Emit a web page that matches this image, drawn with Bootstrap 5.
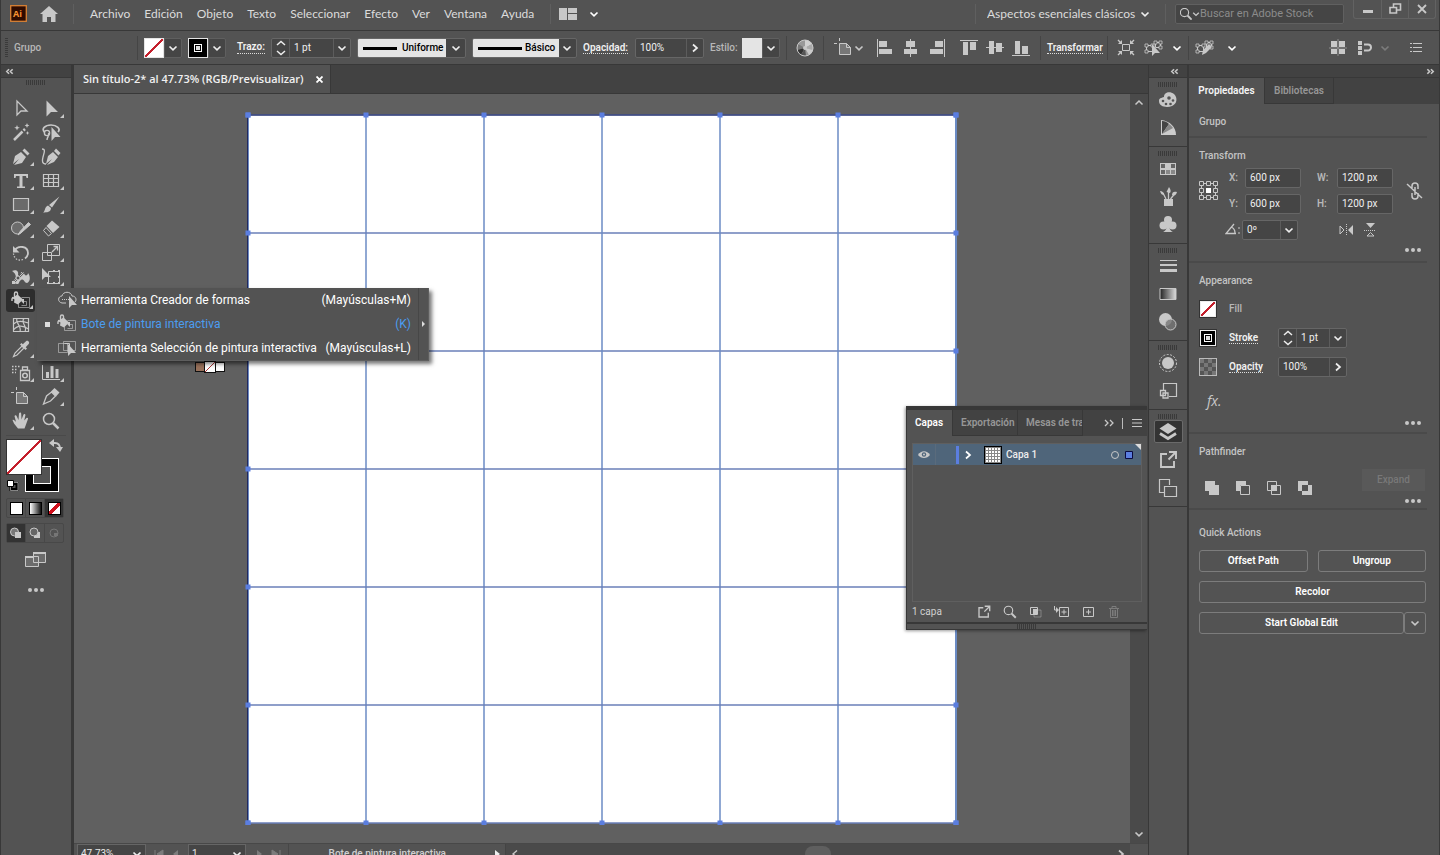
<!DOCTYPE html>
<html lang="es">
<head>
<meta charset="utf-8">
<meta name="viewport" content="width=device-width, initial-scale=1">
<title>Sin título-2* al 47.73% (RGB/Previsualizar)</title>
<link href="https://cdn.jsdelivr.net/npm/bootstrap@5.3.0/dist/css/bootstrap.min.css" rel="stylesheet">
<style>
:root{--panel:#535353;--dark:#424242;--edge:#383838;--field:#454545;--line:#666;--ink:#c8c8c8;--soft:#b8b8b8;
--chev:url("data:image/svg+xml,%3Csvg xmlns='http://www.w3.org/2000/svg' viewBox='0 0 10 10'%3E%3Cpath d='M1.5 3.5 5 6.8 8.5 3.5' fill='none' stroke='%23eee' stroke-width='1.7'/%3E%3C/svg%3E")}
html,body{height:100%}
body{background:var(--panel);color:var(--soft);font:10px/14px Roboto,"Liberation Sans",sans-serif;overflow:hidden}
button,input,select{font:inherit;color:inherit;background:none;border:0;padding:0;margin:0;min-width:0;border-radius:0}
svg{display:block;flex:none;fill:none;stroke:none;color:var(--ink)}
a{color:inherit;text-decoration:none}
.shell{height:calc(100% + 8px);border:solid var(--edge);border-width:0 1px}
.i20{width:20px;height:20px}.i10{width:10px;height:10px}
.center{display:flex;align-items:center;justify-content:center}
.title{font-weight:500}.strong{font-weight:600;color:#f0f0f0}
.dotted{border-bottom:1px dotted #ddd;line-height:12px}
.grip{width:20px;height:5px;background:repeating-linear-gradient(90deg,#3a3a3a 0 1px,transparent 1px 2px)}
.vgrip{width:3px;height:20px;background:repeating-linear-gradient(#3a3a3a 0 1px,transparent 1px 2px)}
.vrule{width:1px;height:24px;background:#454545}
.topbar{height:31px;border-bottom:1px solid var(--edge);padding:0 3px 3px 9px;font:12px/16px Lato,"Open Sans",sans-serif;color:#dcdcdc}
.topbar .vrule{height:20px;background:#5f5f5f}
.home-link{margin:0 15px 0 13px}
.menu-gap{gap:14px}
.select-arrow{appearance:none;background:var(--chev) right 3px center/10px no-repeat}
.workspace-select{width:170px;margin-left:11px;background-position:right 7px center}
.search{width:169px;height:20px;background:var(--field);border:1px solid #606060;border-radius:2px;margin:0 9px;font:11px/16px Roboto,sans-serif}
.search input::placeholder{color:#8b8b8b;opacity:1}
.winbtns{height:19px;border:1px solid #626262;border-top:0;border-radius:0 0 3px 3px;align-self:flex-start}
.winbtns button{width:27px}.winbtns button+button{border-left:1px solid #626262}
.control-bar{height:34px;padding:0 13px 0 4px;gap:6px;border-bottom:1px solid var(--edge)}
.context{width:117px}
.box{display:flex;height:20px;border:1px solid var(--line);border-radius:2px;background:var(--field);color:#f0f0f0;flex:none}
.box>*+*{border-left:1px solid #5c5c5c}
.box input{flex:1;width:10px;padding-left:4px}
.box button{width:17px;display:flex;align-items:center;justify-content:center}
.box svg,.text-white{color:#eee}
.pick{width:38px;border-color:#5f5f5f}
.pick .chip{width:20px;margin:-1px 0 -1px -1px;flex:none;border:1px solid #e4e4e4}
.plain-chip{background:#e4e4e4}
.none{background:linear-gradient(135deg,#fff calc(50% - 1px),#c4202c calc(50% - 1px) calc(50% + 1px),#fff calc(50% + 1px))}
.strokechip{background:#000;display:flex;align-items:center;justify-content:center}
.strokechip::after{content:"";width:8px;height:8px;border:1px solid #fff;background:#000;box-shadow:inset 0 0 0 1px #000,inset 0 0 0 4px #ddd}
.w80{width:80px}.w46{width:46px}.w26{width:26px}.w33{width:33px}.w36{width:36px}.w38{width:38px}.w42{width:42px}.w54{width:54px}.w56{width:56px}.w69{width:69px}
.brush{appearance:none;height:20px;border:1px solid var(--line);border-radius:2px;color:#000;font-weight:500;flex:none}
.brush-a{width:109px;padding-left:44px;background:var(--chev) right 4px center/10px no-repeat,linear-gradient(#000,#000) 5px 8px/34px 3px no-repeat,linear-gradient(#e4e4e4,#e4e4e4) 0/88px 100% no-repeat,var(--field)}
.brush-b{width:105px;padding-left:52px;background:var(--chev) right 4px center/10px no-repeat,linear-gradient(#000,#000) 5px 8px/44px 3px no-repeat,linear-gradient(#e4e4e4,#e4e4e4) 0/86px 100% no-repeat,var(--field)}
.alignset{display:flex}.alignset button{width:26px}
.lead24{width:24px}
.toolbox{width:72px;border-right:2px solid var(--edge);flex:none}
.collapse-strip{height:13px;background:var(--dark);border-bottom:1px solid var(--edge)}
.collapse-strip svg{width:9px;height:9px;stroke-width:2}
.tools{display:grid;grid-template-columns:30px 30px;grid-auto-rows:24px;margin:11px 5px 0;position:relative;padding-bottom:2px;border-bottom:1px solid #4a4a4a}
.tools>button{position:relative;width:30px}
.tools>button.more::after{content:"";position:absolute;right:2px;bottom:3px;border:2px solid var(--ink);border-left-color:transparent;border-top-color:transparent}
.tools .active-tool{background:#2d2d2d;border-radius:3px;width:29px;height:23px}
.flyout{position:absolute;left:31px;top:191px;width:392px;background:#535353;border:1px solid #5e5e5e;border-width:0 1px 1px 0;box-shadow:3px 3px 4px #0008;z-index:5;font-size:12px;color:#fff;display:flex}
.flyout .fly-item{height:24px;display:flex;width:100%;align-items:center;text-align:left;white-space:nowrap}
.flyout .fly-mark{width:20px;display:flex;justify-content:center}
.fly-mark i{width:5px;height:5px;background:#ddd}
.flyout .fly-item.chosen{color:#4b9df0}
.flyout .fly-key{margin-left:auto;padding-right:7px}
.flyout .tear{width:10px;flex:none;border-left:1px solid #474747}
.swatches{height:55px;margin:3px 5px 0;position:relative}
.sw-stroke{position:absolute;left:19px;top:19px;width:34px;height:34px;background:#000;border:1px solid #fff;padding:7px}
.sw-stroke i{display:block;height:100%;border:1px solid #fff;background:#535353}
.sw-fill{position:absolute;left:0;top:0;width:36px;height:36px;border:1px solid #333}
.sw-swap{position:absolute;right:3px;top:0}.sw-reset{position:absolute;left:0;top:40px}
.seg{display:flex;height:20px;border:1px solid #484848;border-radius:2px;margin:0 7px 5px 5px}
.seg button{flex:1;display:flex;align-items:center;justify-content:center}.seg button+button{border-left:1px solid #484848}.seg .on{background:#333}
.seg i{width:13px;height:13px;border:1px solid #000}
.white{background:#fff}.fade-chip{background:linear-gradient(90deg,#fff,#111)}
.thick{background:linear-gradient(135deg,#fff calc(50% - 2px),#d0101c calc(50% - 2px) calc(50% + 2px),#fff calc(50% + 2px))}
.doc{position:relative;border-left:1px solid var(--edge);background:var(--dark)}
.doctabs{height:29px;border-bottom:1px solid var(--edge)}
.doctab{width:257px;padding:0 7px 0 9px;background:var(--panel);border-right:1px solid var(--edge);font:600 11px/16px "Open Sans",sans-serif;color:#f0f0f0}
.canvas{background:#606060;position:relative;overflow:hidden}
.artboard{width:714px;height:713px}
.cursor-chips{position:absolute;left:121px;top:267px;display:flex}
.cursor-chips i{width:10px;height:10px;border:1px solid #111;margin-top:1px}
.cursor-chips .mid{width:12px;height:12px;margin:0 -1px}
.cursor-chips .none{background:linear-gradient(135deg,#fff 47%,#a33 47% 53%,#fff 53%)}
.brown{background:#97705a}
.vscroll{width:18px;background:#4a4a4a;padding:4px 0 4px}
.statusbar{height:20px;background:var(--panel);border-top:1px solid #484848;color:#e8e8e8}
.statusbar select{height:20px;border:1px solid var(--line);background-color:var(--field);padding-left:3px}
.statusbar .zoom{width:69px;margin-left:3px}.statusbar .page{width:58px}
.navbtns{width:42px}.navbtns button{width:17px}
.statustext{width:207px;border-left:1px solid #474747;padding-right:49px;color:#cfcfcf}
.hscroll{background:#4a4a4a;border-left:1px solid #444}
.corner{width:18px}
.thumb{width:26px;height:16px;border-radius:8px;background:#5f5f5f}
.dockcol{width:41px;border-right:2px solid var(--edge);border-left:1px solid var(--edge);flex:none}
.dockgroup{padding:4px 0 2px;border-bottom:1px solid var(--edge);display:flex;flex-direction:column;align-items:center}
.dockgroup .grip{margin-bottom:1px}
.dockgroup button{width:29px;height:23px;margin:0 0 5px;border:1px solid transparent;border-radius:2px}
.dockgroup .on{background:#333;border-color:#6a6a6a}
.props{width:250px;flex:none}
.ptabs{background:var(--dark);height:26px}
.ptabs button{border-right:1px solid var(--edge);border-bottom:1px solid var(--edge);font-weight:600;color:#969696;width:69px}
.ptabs .on{width:76px;background:var(--panel);color:#f5f5f5;border-bottom:0}
.sect{margin-right:12px;padding:9px 2px 0 10px;border-bottom:2px solid #4a4a4a}
.sect h2,.quick h2{font-size:10px;line-height:18px;font-weight:500;margin:0;color:#c4c4c4}
.sect-head{height:34px}.sect-transform{height:125px}.sect-look{height:171px}.sect-path{height:76px}
.tgrid{display:grid;grid-template-columns:30px 16px 56px 16px 20px 56px 1fr;grid-auto-rows:20px;gap:6px 0;margin-top:3px;align-items:center}
.tgrid label{font-weight:600}
.refpoint{grid-row:span 2;justify-self:start}.unlink{grid-row:span 2;justify-self:end;margin-right:1px}
.angle{grid-column:1/4;padding-left:26px}.flips{grid-column:5/7;padding-left:22px;gap:11px}
.dots{display:flex;gap:2px;justify-content:flex-end;padding-right:4px}
.dots i{width:4px;height:4px;border-radius:50%;background:var(--ink)}
.look{display:flex;align-items:center;height:29px}
.look .name{width:61px;padding-left:12px}
.chip18{width:18px;height:18px;border:1px solid #333;box-shadow:inset 0 0 0 1px #eee;flex:none}
.checker{border-color:#bbb;box-shadow:none;background:repeating-conic-gradient(#777 0 25%,#555 0 50%) 0/8px 8px}
.fxbtn{font:italic 14px/24px "Open Sans",sans-serif;color:var(--ink)}
.pathrow{gap:17px;padding:0 0 0 6px}
.quick{margin-right:13px;padding:14px 0 0 10px}
.qgrid{display:grid;grid-template-columns:1fr 1fr;gap:9px 10px;margin-top:8px}
.qwide{grid-column:1/3}
.qbtn{height:22px;border:1px solid #7c7c7c;border-radius:3px;color:#fff;font-weight:600}
.qmore{width:22px}
.expand-btn{width:63px;height:22px;background:#595959;color:#787878;font-weight:500}
.layers{position:absolute;right:1px;top:341px;width:241px;background:var(--panel);border-top:4px solid var(--edge);border-left:1px solid var(--edge);box-shadow:-1px 1px 3px #0006;z-index:3}
.ltabs{height:26px;background:var(--dark)}
.ltabs button{white-space:nowrap;overflow:hidden;font-weight:600;color:#979797;text-align:left;border-right:1px solid var(--edge);border-bottom:1px solid var(--edge);padding-left:8px;width:65px}
.ltabs .on{background:var(--panel);color:#fff;border-bottom:0;width:46px}
.bar11{width:1px;height:11px;background:#bbb}
.llist{margin:7px 5px 0;border:1px solid #5f5f5f;height:159px}
.lrow{height:21px;background:#4f657a;color:#eee;position:relative;font-weight:500}
.lrow .fold{position:absolute;right:0;top:0;border:3px solid #ddd;border-left-color:transparent;border-bottom-color:transparent}
.lrow .eye{width:22px}.lrow .lock{width:21px;height:21px;border-left:1px solid #5a6b7c}.lrow .tint{width:3px;height:18px;background:#5b7ee0}
.lrow .expander{margin:0 11px 0 4px}
.lthumb{width:18px;height:18px;border:1px solid #000;background:repeating-linear-gradient(90deg,#888 0 1px,transparent 1px 3px),repeating-linear-gradient(#888 0 1px,#fff 1px 3px)}
.lfoot{height:20px;padding:0 5px;color:#d0d0d0}
.lfoot .btnrow{margin:0 18px 0 auto;gap:6px}
.lgrip{height:8px;border-top:2px solid var(--edge);border-bottom:1px solid var(--edge)}
.shrinkable{min-height:0;min-width:0}
</style>
</head>
<body>
<svg width="0" height="0" class="position-absolute" aria-hidden="true"><defs>
<linearGradient id="gr"><stop stop-color="#222"/><stop offset="1" stop-color="#ddd"/></linearGradient>
<symbol id="chev" viewBox="0 0 10 10"><path d="M1.5 3.5 5 6.8 8.5 3.5" stroke="currentColor" stroke-width="1.7"/></symbol>
<symbol id="chevup" viewBox="0 0 10 10"><path d="M1.5 6.5 5 3 8.5 6.5" stroke="currentColor" stroke-width="1.5"/></symbol>
<symbol id="chevr" viewBox="0 0 10 10"><path d="M3 1.5 7 5 3 8.5" stroke="currentColor" stroke-width="1.7"/></symbol>
<symbol id="chevl" viewBox="0 0 10 10"><path d="M7 1.5 3 5 7 8.5" stroke="currentColor" stroke-width="1.4"/></symbol>
<symbol id="dbll" viewBox="0 0 10 10"><path d="M4.500 2.500 2 5 4.500 7.500M8.500 2.500 6 5 8.500 7.500" stroke="currentColor" stroke-width="1.800"/></symbol>
<symbol id="dblrs" viewBox="0 0 10 10"><path d="M1.500 2.500 4 5 1.500 7.500M5.500 2.500 8 5 5.500 7.500" stroke="currentColor" stroke-width="1.800"/></symbol>
<symbol id="dblr" viewBox="0 0 10 10"><path d="M1 2 4 5 1 8M6 2 9 5 6 8" stroke="currentColor" stroke-width="1.3"/></symbol>
<symbol id="updown" viewBox="0 0 12 18"><path d="M2 6 6 2.5 10 6M2 12 6 15.5 10 12" stroke="#eee" stroke-width="1.5"/></symbol>
<symbol id="paint" viewBox="0 0 20 20"><path d="M10.500 6.500h8v10h-11v-4M10.500 10.500h5v4h-5" stroke="currentColor" stroke-opacity=".6"/><path d="M1 7 6.500 3.500 12 8.500 7 13.500 3 11.500 3.500 8.500Z" fill="currentColor"/><path d="M3.500 6V2.500a1.500 1.500 0 0 1 3 0V5M2 6 1 8v2" stroke="currentColor" stroke-width="1.400"/><path d="M10 8h3v5l-2-2Z" fill="currentColor"/></symbol>
<symbol id="sel" viewBox="0 0 20 20"><path d="M6 2v14l4-4h6Z" stroke="currentColor" stroke-width="1.3"/></symbol>
<symbol id="dir" viewBox="0 0 20 20"><path d="M5.500 1.500v16L10 13h7Z" fill="currentColor"/></symbol>
<symbol id="hand" viewBox="0 0 20 20"><path d="M7 17.500 3 12.500 1.500 9c1-.8 2 .2 3.500 2L3.500 5c.6-1.400 2-.8 2.200.3L7.500 9 8 2.500c.6-1.400 2.200-1 2.200.3l.3 5.700 2-5c.8-1.200 2.200-.5 1.900.8L13.200 9.500l2.300-2.500c1-.7 2 .2 1.400 1.300L15 13.500l-1.500 4Z" fill="currentColor"/></symbol>
<symbol id="lens" viewBox="0 0 20 20"><circle cx="8" cy="8" r="5.500" stroke="currentColor" stroke-width="1.500"/><path d="m12 12 5.500 5.500" stroke="currentColor" stroke-width="2.500"/></symbol>
<symbol id="export" viewBox="0 0 20 20"><path d="M9 4H3v13h13v-6M11 2h7v7M17 3l-6.500 6.500" stroke="currentColor" stroke-width="1.900"/></symbol>
<symbol id="artb" viewBox="0 0 20 20"><path d="M5.500 5.500h7l4 4v7h-11Z" fill="#777" stroke="currentColor"/><path d="M5.500 0v3M0 5.500h3M12.500 5.500v4h4" stroke="currentColor"/></symbol>
<symbol id="ptsel" viewBox="0 0 20 20"><path d="M2.500 7.500h6v6h-6zM11.500 4.500h5v5h-5z" stroke="currentColor"/><path d="M1 6h3v3H1zM1 12h3v3H1zM7 6h3v3H7zM10 3h3v3h-3zM15 3h3v3h-3zM15 8h3v3h-3z" fill="#535353" stroke="currentColor" stroke-width=".8"/></symbol>
</defs></svg>

<div class="shell d-flex flex-column">
<header class="topbar d-flex align-items-center">
 <svg width="17" height="17" viewBox="0 0 17 17"><rect x=".7" y=".7" width="15.600" height="15.600" fill="#2f0b00" stroke="#d98236" stroke-width="1.300"/><text x="3" y="12" font-family="Open Sans" font-size="9" font-weight="700" fill="#f79332">Ai</text></svg>
 <a href="#" aria-label="Inicio" class="home-link"><svg width="18" height="16" viewBox="0 0 18 16"><path d="M9 0 0 8h2.500v8H7v-5h4v5h4.500V8H18Z" fill="currentColor"/></svg></a>
 <span class="vrule"></span>
 <nav class="d-flex menu-gap px-3" aria-label="Menú principal"><a href="#">Archivo</a><a href="#">Edición</a><a href="#">Objeto</a><a href="#">Texto</a><a href="#">Seleccionar</a><a href="#">Efecto</a><a href="#">Ver</a><a href="#">Ventana</a><a href="#">Ayuda</a></nav>
 <span class="vrule"></span>
 <button class="d-flex align-items-center gap-2 ms-2" aria-label="Organizar documentos"><svg width="18" height="12" viewBox="0 0 18 12"><path d="M0 0h8v12H0zM9 0h9v5H9zM9 6h9v6H9z" fill="currentColor"/></svg><svg class="i10 text-white ms-1"><use href="#chev"/></svg></button>
 <span class="vrule ms-auto"></span>
 <select class="select-arrow workspace-select" aria-label="Espacio de trabajo"><option>Aspectos esenciales clásicos</option></select>
 <span class="vrule ms-2"></span>
 <label class="search d-flex align-items-center"><svg class="ms-1" width="12" height="12" viewBox="2 2 16 16"><use href="#lens" width="20" height="20"/></svg><svg width="8" height="8"><use href="#chev"/></svg><input class="flex-fill" type="search" placeholder="Buscar en Adobe Stock" aria-label="Buscar en Adobe Stock"></label>
 <div class="winbtns d-flex"><button class="center" aria-label="Minimizar"><svg width="10" height="10"><path d="M0 6h10v3H0z" fill="currentColor"/></svg></button><button class="center" aria-label="Restaurar"><svg width="13" height="12"><path d="M4.500 4V1h7v6H8M1 4.500h6.500V10H1Z" stroke="currentColor" stroke-width="1.600"/></svg></button><button class="center" aria-label="Cerrar"><svg width="10" height="10"><path d="m1 1 8 8M9 1 1 9" stroke="currentColor" stroke-width="1.800"/></svg></button></div>
</header>

<div class="control-bar d-flex align-items-center" role="toolbar" aria-label="Control">
 <span class="vgrip"></span><span class="context title">Grupo</span><span class="vrule"></span>
 <div class="box pick"><span class="chip none"></span><button aria-label="Relleno"><svg class="i10"><use href="#chev"/></svg></button></div>
 <div class="box pick"><span class="chip strokechip"></span><button aria-label="Color de trazo"><svg class="i10"><use href="#chev"/></svg></button></div>
 <label for="trazo" class="w33 ps-2 flex-shrink-0 text-nowrap d-flex justify-content-end"><span class="dotted strong">Trazo:</span></label>
 <div class="box w80"><button aria-label="Ajustar trazo"><svg width="12" height="18"><use href="#updown"/></svg></button><input id="trazo" value="1 pt"><button aria-label="Grosores"><svg class="i10"><use href="#chev"/></svg></button></div>
 <select class="brush brush-a" aria-label="Perfil de anchura"><option>Uniforme</option></select>
 <select class="brush brush-b" aria-label="Pincel"><option>Básico</option></select>
 <label for="opac" class="w46"><span class="dotted strong">Opacidad:</span></label>
 <div class="box w69"><input id="opac" value="100%"><button aria-label="Opacidad"><svg class="i10"><use href="#chevr"/></svg></button></div>
 <span class="w26 title">Estilo:</span>
 <div class="box pick"><span class="chip plain-chip"></span><button aria-label="Estilo"><svg class="i10"><use href="#chev"/></svg></button></div>
 <span class="vrule"></span>
 <button class="lead24 center" aria-label="Volver a colorear"><svg width="18" height="18" viewBox="0 0 18 18"><circle cx="9" cy="9" r="8" fill="#999"/><path d="M9 9V1A8 8 0 0 1 16 5Z" fill="#d0d0d0"/><path d="M9 9 2 5A8 8 0 0 0 1 11Z" fill="#777"/><path d="M9 9 1 11a8 8 0 0 0 4 5Z" fill="#333"/><path d="m9 9-4 7a8 8 0 0 0 5 1Z" fill="#555"/><path d="m9 9 7-4a8 8 0 0 1 1 6Z" fill="#aaa"/><path d="m9 9 8 2a8 8 0 0 1-4 5Z" fill="#ccc"/><circle cx="9" cy="9" r="8" stroke="#c8c8c8"/><circle cx="9" cy="9" r="2" fill="#c8c8c8"/></svg></button>
 <span class="vrule"></span>
 <button class="d-flex align-items-center w36" aria-label="Mesa de trabajo"><svg class="i20 ms-1"><use href="#artb"/></svg><svg class="i10"><use href="#chev"/></svg></button>
 <div class="alignset"><button class="center" aria-label="Alinear a la izquierda"><svg class="i20"><path d="M2.500 1v18" stroke="currentColor"/><path d="M4 3h8v6H4zM4 11h13v5H4z" fill="currentColor"/></svg></button><button class="center" aria-label="Centrar horizontalmente"><svg class="i20"><path d="M9.500 1v18" stroke="currentColor"/><path d="M5 3h9v6H5zM3 11h13v5H3z" fill="currentColor"/></svg></button><button class="center" aria-label="Alinear a la derecha"><svg class="i20"><path d="M17.500 1v18" stroke="currentColor"/><path d="M8 3h8v6H8zM3 11h13v5H3z" fill="currentColor"/></svg></button></div>
 <div class="alignset"><button class="center" aria-label="Alinear arriba"><svg class="i20"><path d="M1 2.500h18" stroke="currentColor"/><path d="M4 4h5v13H4zM11 4h6v8h-6z" fill="currentColor"/></svg></button><button class="center" aria-label="Centrar verticalmente"><svg class="i20"><path d="M1 9.500h18" stroke="currentColor"/><path d="M4 3h5v13H4zM11 5h6v9h-6z" fill="currentColor"/></svg></button><button class="center" aria-label="Alinear abajo"><svg class="i20"><path d="M1 17.500h18" stroke="currentColor"/><path d="M4 3h5v13H4zM11 8h6v8h-6z" fill="currentColor"/></svg></button></div>
 <span class="vrule"></span>
 <button class="w54 strong"><span class="dotted">Transformar</span></button>
 <span class="vrule"></span>
 <button class="lead24 center" aria-label="Aislar"><svg class="i20"><path d="M6.500 6.500h7v6h-7z" stroke="currentColor"/><path d="M2 2l3 3M18 2l-3 3M2 17l3-3M18 17l-3-3" stroke="currentColor" stroke-width="1.400"/><path d="M6 2v4H2ZM14 2v4h4ZM6 17v-4H2ZM14 17v-4h4Z" fill="currentColor"/></svg></button>
 <button class="d-flex align-items-center w38" aria-label="Seleccionar similares"><svg class="i20"><use href="#ptsel"/><path d="M8 6v12l3-3h5Z" fill="currentColor"/></svg><svg class="i10 ms-2 text-white"><use href="#chev"/></svg></button>
 <span class="vrule"></span>
 <button class="d-flex align-items-center justify-content-between w42" aria-label="Editar similares"><svg class="i20"><use href="#ptsel"/><path d="M7 17l1-5 6-6 3 3-6 6Z" fill="currentColor"/></svg><svg class="i10 text-white"><use href="#chev"/></svg></button>
 <div class="d-flex align-items-center ms-auto">
 <button class="me-2" aria-label="Ajustar a píxel"><svg class="i20"><path d="M3 3h6v6H3zM11 3h6v6h-6zM3 11h6v5H3zM11 11h6v5h-6z" fill="currentColor"/><path d="M10 1v17M1 10h18" stroke="currentColor" stroke-opacity=".5"/></svg></button>
 <button aria-label="Ajustar a forma"><svg class="i20"><path d="M2 3h4v4H2zM2 8h4v4H2zM2 13h4v4H2z" fill="currentColor"/><path d="M8 6.500h4a3 3 0 0 1 0 6H8" stroke="currentColor" stroke-width="2"/></svg></button>
 <svg class="i10 ms-1 me-3" opacity=".35"><use href="#chev"/></svg>
 <button aria-label="Menú de panel"><svg class="i20"><path d="M4 5.500h2M4 9.500h2M4 13.500h2M7 5.500h9M7 9.500h9M7 13.500h9" stroke="currentColor"/></svg></button></div>
</div>

<div class="d-flex flex-fill shrinkable">
<aside class="toolbox" aria-label="Herramientas">
 <div class="collapse-strip d-flex align-items-center ps-1"><svg class="i10"><use href="#dbll"/></svg></div>
 <div class="center" style="height:8px"><span class="grip"></span></div>
 <div class="tools">
 <button class="center" aria-label="Selección"><svg class="i20"><use href="#sel"/></svg></button>
 <button class="center more" aria-label="Selección directa"><svg class="i20"><use href="#dir"/></svg></button>
 <button class="center" aria-label="Varita mágica"><svg class="i20"><path d="m3 17 8.500-8.500" stroke="currentColor" stroke-width="2.500"/><path d="m12.500 7.500 1.500-1.500" stroke="currentColor" stroke-width="2.500"/><path d="m6 2 .8 2 2 .8-2 .8-.8 2-.8-2-2-.8 2-.8ZM16 0l.7 1.700 1.700.8-1.700.7L16 5l-.7-1.800-1.700-.7 1.700-.8ZM16.500 8l.6 1.400 1.400.6-1.400.6-.6 1.400-.6-1.400-1.400-.6 1.400-.6Z" fill="currentColor"/></svg></button>
 <button class="center" aria-label="Lazo"><svg class="i20"><path d="M3.500 9C0 6 4 2 10 2s10 4 7 7" stroke="currentColor" stroke-width="1.700"/><circle cx="6" cy="10" r="2.600" stroke="currentColor" stroke-width="1.400"/><path d="M7.500 10c1 3-1.500 4-1.500 7" stroke="currentColor" stroke-width="1.400"/><path d="M10.500 4v14l3.500-4h5.500Z" fill="currentColor"/></svg></button>
 <button class="center more" aria-label="Pluma"><svg class="i20"><path d="m2 17 2-8 6-4 5 5-4 6-8 2 5-6Z" fill="currentColor"/><path d="m11.500 3.500 2-2 5 5-2 2Z" fill="currentColor"/></svg></button>
 <button class="center" aria-label="Curvatura"><svg class="i20"><path d="m5 17 2-8 5-4 5 5-4 5-7 3 5-6Z" fill="currentColor"/><path d="m13 4 2-2.500 4.500 4.500-2 2.500Z" fill="currentColor"/><path d="M1 2c4 0 2 4 1 8s-1 7 3 7" stroke="currentColor" stroke-width="1.300"/></svg></button>
 <button class="center more" aria-label="Texto"><svg class="i20"><path d="M3 3h14v4h-1.500L15 5h-3.500v10.500H14V17H6v-1.500h2.500V5H5l-.5 2H3Z" fill="currentColor"/></svg></button>
 <button class="center more" aria-label="Cuadrícula"><svg class="i20"><path d="M2.500 3.500h15v12h-15zM2.500 7.500h15M2.500 11.500h15M7.500 3.500v12M12.500 3.500v12" stroke="currentColor" stroke-width="1.200"/></svg></button>
 <button class="center more" aria-label="Rectángulo"><svg class="i20"><path d="M2.500 3.500h15v12h-15z" fill="#6a6a6a" stroke="currentColor" stroke-width="1.200"/></svg></button>
 <button class="center more" aria-label="Pincel"><svg class="i20"><path d="M18.500 1.500 11 12.500 8 10ZM7 10.500l3 2.500c0 4-4 4.500-8 4.500 2.500-1 1-5 5-7Z" fill="currentColor"/></svg></button>
 <button class="center more" aria-label="Lápiz"><svg class="i20"><circle cx="6.500" cy="9" r="6" fill="#6c6c6c" stroke="currentColor"/><path d="m17.500 3.500 2 2L11 13l-4 3 2.500-4Z" fill="currentColor" stroke="currentColor"/></svg></button>
 <button class="center more" aria-label="Borrador"><svg class="i20"><path d="M11 1.500 18.500 8 12 14 5.500 7Z" fill="currentColor"/><path d="m5 8.500-2.500 3 5 5.500 3-2.500Z" stroke="currentColor"/></svg></button>
 <button class="center more" aria-label="Rotar"><svg class="i20"><path d="M4 7C7 2 17 3 17 10c0 2-1 4-3 5.500" stroke="currentColor" stroke-width="1.800"/><path d="M2 3v6.500h6.500Z" fill="currentColor"/><path d="M12 16.500c-5 2-9-1-9.500-6" stroke="currentColor" stroke-width="1.300" stroke-dasharray="1.500 1.500"/></svg></button>
 <button class="center more" aria-label="Escala"><svg class="i20"><path d="M6.500 1.500h12v11h-12zM1.500 9.500h9v8h-9z" stroke="currentColor"/><path d="m11 9 5-5M12.500 3.500h4v4" stroke="currentColor" stroke-width="1.300"/></svg></button>
 <button class="center more" aria-label="Anchura"><svg class="i20"><path d="M1 4c4-2 7 0 6 4 1 2 3 0 3-3 3 0 3 2 4 3s3 0 3-2c3 4 2 9-1 10-3 0-3-5-6-3s-1 4-4 4-5-3-2-5c2-3 0-6-3-8Z" fill="currentColor"/><path d="m1.500 16.500 11-11" stroke="#535353" stroke-width="2"/><path d="m1.500 16.500 11-11" stroke="currentColor"/><circle cx="7" cy="11" r="2" fill="#535353" stroke="currentColor"/><path d="M1 14h3v3H1z" fill="currentColor"/></svg></button>
 <button class="center more" aria-label="Transformación libre"><svg class="i20"><path d="M7.500 4.500h11v12h-11z" stroke="currentColor"/><path d="M1 1v12l3-3h6Z" fill="currentColor"/><path d="M12 3h2v2h-2zM17 3h2v2h-2zM17 9h2v2h-2zM17 15h2v2h-2zM12 15h2v2h-2zM6 15h2v2H6z" fill="currentColor"/></svg></button>
 <button class="center more active-tool" aria-label="Bote de pintura interactiva"><svg class="i20"><use href="#paint"/></svg></button><span></span>
 <button class="center" aria-label="Malla"><svg class="i20"><path d="M2.500 3.500h15v13h-15zM2.500 9c4-4 9-3 15-1M2.500 15c4-5 9-5 15-1M6 3.500c-2 4 5 8 3 13M13 3.500c-4 4 4 8 1 13" stroke="currentColor" stroke-width="1.200"/></svg></button><span></span>
 <button class="center more" aria-label="Cuentagotas"><svg class="i20"><path d="M2.500 17.500 4 14l7-7 2 2-7 7Z" stroke="currentColor" stroke-width="1.200"/><path d="m9 5.500 5.500 5.500 1.500-1.500-1.300-1.300 3-3.200c1.500-1.600-1-4.200-2.700-2.700l-3.200 3-1.300-1.300Z" fill="currentColor"/></svg></button><span></span>
 <button class="center more" aria-label="Rociar símbolos"><svg class="i20"><path d="M9.500 7.500h9v10h-9zM11.500 4h5v3h-5z" stroke="currentColor" stroke-width="1.300"/><circle cx="14" cy="12.500" r="2.300" stroke="currentColor" stroke-width="1.500"/><path d="M1 3.500h8M1 6.500h6M1 9.500h4" stroke="currentColor" stroke-width="1.500" stroke-dasharray="1.500 1.500"/></svg></button>
 <button class="center more" aria-label="Gráfica"><svg class="i20"><path d="M1.500 2v14.500H19" stroke="currentColor"/><path d="M5 9h3v6H5zM9.500 3h3v12h-3zM14.500 6h3v9h-3z" fill="currentColor"/></svg></button>
 <button class="center" aria-label="Mesa de trabajo"><svg class="i20"><use href="#artb"/></svg></button>
 <button class="center more" aria-label="Sector"><svg class="i20"><path d="m2.500 17 3-8 5-4 4 4-5 5Z" stroke="currentColor" stroke-width="1.300"/><path d="m10 4.500 3.500-3.500 5 4.500-3.500 4Z" fill="currentColor"/></svg></button>
 <button class="center more" aria-label="Mano"><svg class="i20"><use href="#hand"/></svg></button>
 <button class="center" aria-label="Zoom"><svg class="i20"><use href="#lens"/></svg></button>
 <div class="flyout"><div class="flex-fill">
  <button class="fly-item"><span class="fly-mark"></span><svg class="i20"><path d="M5 13C0 12 1 6 5 6c1-5 9-5 10 0 4 0 5 4 3 6M5 13h4" stroke="currentColor"/><path d="M5 9.500h8" stroke="currentColor" stroke-dasharray="1 1"/><path d="M12 6v12l3-3h5Z" fill="currentColor"/></svg><span class="ps-1">Herramienta Creador de formas</span><span class="fly-key">(Mayúsculas+M)</span></button>
  <button class="fly-item chosen"><span class="fly-mark"><i></i></span><svg class="i20"><use href="#paint"/></svg><span class="ps-1">Bote de pintura interactiva</span><span class="fly-key">(K)</span></button>
  <button class="fly-item"><span class="fly-mark"></span><svg class="i20"><path d="M1.500 5.500h9v9h-9zM6.500 3.500h12v9h-12z" stroke="currentColor" stroke-opacity=".6"/><path d="M7.500 5.500h5v5" stroke="currentColor"/><path d="M11 6v12l3-3h5Z" fill="currentColor"/></svg><span class="ps-1">Herramienta Selección de pintura interactiva</span><span class="fly-key">(Mayúsculas+L)</span></button></div>
  <button class="tear center" aria-label="Separar"><svg width="4" height="6"><path d="M0 0v6l3-3Z" fill="#ddd"/></svg></button></div>
 </div>
 <div class="swatches"><button class="sw-stroke" aria-label="Trazo"><i></i></button><button class="sw-fill none" aria-label="Relleno"></button><button class="sw-swap" aria-label="Intercambiar"><svg width="14" height="14"><path d="M3 4h3c4 0 5 2 5 6" stroke="currentColor" stroke-width="1.800"/><path d="M5 0v8L0 4ZM7 8h7l-3 5Z" fill="currentColor"/></svg></button><button class="sw-reset" aria-label="Por defecto"><svg width="14" height="13"><path d="M5 4.500h6v6H5z" stroke="#000" stroke-width="3"/><path d="M4.500 3.500h7.500v8H4.500z" stroke="#ddd" stroke-width=".6"/><path d="M1.500 1.500h6v6h-6z" fill="#fff" stroke="#000"/></svg></button></div>
 <div class="seg mt-1"><button aria-label="Color"><i class="white"></i></button><button aria-label="Degradado"><i class="fade-chip"></i></button><button class="on" aria-label="Ninguno"><i class="thick"></i></button></div>
 <div class="seg"><button class="on" aria-label="Dibujo normal"><svg width="14" height="14"><circle cx="5.500" cy="6" r="4" fill="#777" stroke="currentColor"/><path d="M6 6h6v6H6z" fill="currentColor"/></svg></button><button aria-label="Dibujar detrás"><svg width="14" height="14"><path d="M6 6h6v6H6z" fill="currentColor"/><circle cx="6" cy="6" r="4" fill="#666" stroke="currentColor"/></svg></button><button aria-label="Dibujar dentro"><svg width="14" height="14" opacity=".3"><circle cx="7" cy="7" r="4" stroke="currentColor"/><path d="M7 7h4v3H7z" fill="currentColor"/></svg></button></div>
 <button class="center mx-auto mt-2" aria-label="Modo de pantalla"><svg width="24" height="17"><path d="M1.500 5.500h13v10h-13zM9.500 1.500h12v10h-12z" fill="#6c6c6c" stroke="currentColor"/><path d="M9 1h13v2H9zM1 5h8v2H1z" fill="currentColor"/></svg></button>
 <button class="dots mx-auto mt-3 pt-1 pe-0" aria-label="Editar barra"><i></i><i></i><i></i></button>
</aside>

<main class="doc d-flex flex-column flex-fill shrinkable">
 <div class="doctabs d-flex"><div class="doctab d-flex align-items-center justify-content-between"><span>Sin título-2* al 47.73% (RGB/Previsualizar)</span><button aria-label="Cerrar documento"><svg width="7" height="7"><path d="m.5.5 6 6M6.500.5l-6 6" stroke="#fff" stroke-width="1.800"/></svg></button></div></div>
 <div class="d-flex flex-fill shrinkable">
  <div class="canvas flex-fill center">
   <svg class="artboard" viewBox="0 0 714 713" role="img" aria-label="Mesa de trabajo con cuadrícula"><rect x="3" y="3" width="708" height="708" fill="#fff"/><g id="grid"></g></svg>
   <div class="cursor-chips"><i class="brown"></i><i class="mid none"></i><i class="white"></i></div>
  </div>
  <div class="vscroll d-flex flex-column align-items-center justify-content-between"><svg class="i10"><use href="#chevup"/></svg><svg class="i10"><use href="#chev"/></svg></div>
 </div>
 <div class="statusbar d-flex align-items-stretch">
  <select class="select-arrow zoom" aria-label="Zoom"><option>47.73%</option></select>
  <div class="navbtns center"><button class="center" aria-label="Primera"><svg class="i10" opacity=".35"><path d="M1 1v8M9 1v8L3 5Z" fill="currentColor" stroke="currentColor"/></svg></button><button class="center" aria-label="Anterior"><svg class="i10" opacity=".35"><path d="M7 1v8L2 5Z" fill="currentColor"/></svg></button></div>
  <select class="select-arrow page" aria-label="Mesa de trabajo"><option>1</option></select>
  <div class="navbtns center"><button class="center" aria-label="Siguiente"><svg class="i10" opacity=".35"><path d="M3 1v8l5-4Z" fill="currentColor"/></svg></button><button class="center" aria-label="Última"><svg class="i10" opacity=".35"><path d="M9 1v8M1 1v8l6-4Z" fill="currentColor" stroke="currentColor"/></svg></button></div>
  <div class="statustext d-flex align-items-center justify-content-end title">Bote de pintura interactiva</div>
  <button aria-label="Mostrar"><svg class="i10"><path d="M0 1v8l5-4Z" fill="#eee"/></svg></button>
  <div class="hscroll flex-fill d-flex align-items-center justify-content-between ps-1 pe-1"><svg class="i10"><use href="#chevl"/></svg><span class="thumb"></span><svg class="i10"><use href="#chevr"/></svg></div><span class="corner"></span>
 </div>

 <section class="layers" aria-label="Capas">
  <div class="ltabs d-flex"><button class="on">Capas</button><button>Exportación</button><button>Mesas de trabajo</button><div class="d-flex flex-fill align-items-center justify-content-end gap-2 pe-1"><svg class="i10"><use href="#dblr"/></svg><span class="bar11"></span><svg width="12" height="10"><path d="M1 1.500h10M1 5h10M1 8.500h10" stroke="currentColor"/></svg></div></div>
  <div class="llist"><div class="lrow d-flex align-items-center">
   <button class="center eye" aria-label="Visibilidad"><svg width="12" height="10"><path d="M0 5c3-5 9-5 12 0-3 4-9 4-12 0Z" fill="currentColor"/><circle cx="6" cy="4.500" r="2.200" fill="#4f657a"/><circle cx="6" cy="4.500" r="1" fill="currentColor"/></svg></button>
   <span class="lock"></span><span class="tint"></span>
   <svg class="i10 expander text-white"><use href="#chevr"/></svg><span class="lthumb me-1"></span><span>Capa 1</span>
   <svg class="ms-auto me-2" width="24" height="10"><circle cx="6" cy="5" r="3.500" stroke="currentColor"/><path d="M16.500 1.500h7v7h-7z" fill="#5b7ee0" stroke="#0a0a40"/></svg><span class="fold"></span></div></div>
  <div class="lfoot d-flex align-items-center"><span>1 capa</span><div class="btnrow d-flex">
   <button aria-label="Exportar"><svg class="i20" viewBox="-4 -4 28 28"><use href="#export" width="20" height="20"/></svg></button><button aria-label="Localizar"><svg class="i20" viewBox="-3 -3 26 26"><use href="#lens" width="20" height="20"/></svg></button><button aria-label="Máscara"><svg class="i20"><path d="M9 8h6v7H8v-6" stroke="currentColor" stroke-opacity=".4"/><path d="M4.500 5.500h7v7h-7z" stroke="currentColor"/><path d="M7 7h5v5H7z" fill="currentColor"/></svg></button><button aria-label="Subcapa"><svg class="i20"><path d="M7.500 5.500h9v9h-9zM12 7.500v5M9.500 10h5M2.500 4v4h3" stroke="currentColor"/><path d="M4 5v6l3-3Z" fill="currentColor"/></svg></button><button aria-label="Capa nueva"><svg class="i20"><path d="M5.500 5.500h10v9h-10zM10.500 7.500v5M8 10h5" stroke="currentColor"/></svg></button><button aria-label="Eliminar"><svg class="i20" opacity=".35"><path d="M5 6.500h10M8 6V4.500h4V6M6.500 7v8.500h7V7M8.500 8v6M10 8v6M11.500 8v6" stroke="currentColor"/></svg></button></div></div>
  <div class="lgrip center"><span class="grip"></span></div>
 </section>
</main>

<aside class="dockcol" aria-label="Paneles">
 <div class="collapse-strip d-flex align-items-center justify-content-end pe-2"><svg class="i10"><use href="#dbll"/></svg></div>
 <div class="dockgroup"><span class="grip"></span>
  <button class="center" aria-label="Color"><svg class="i20"><path d="M1 11c0-3 2-3 5-4 0-5 6-6 10-3 4 4 3 10-2 12C9 18 1 17 1 11Z" fill="currentColor"/><g fill="#535353"><circle cx="5" cy="11" r="1.300"/><circle cx="8" cy="14" r="1.300"/><circle cx="12.500" cy="14" r="1.300"/><circle cx="15" cy="10.500" r="1.300"/><circle cx="11" cy="8" r="1.800"/></g></svg></button>
  <button class="center" aria-label="Guía de color"><svg class="i20"><path d="M3 2v15h15C18 9 12 3 3 2Z" fill="#ccc"/><path d="M4 16V3c3 0 5 1 7 3Z" fill="#444"/><path d="m4 16 7-10c2 1 3 3 4 4Z" fill="#888"/></svg></button></div>
 <div class="dockgroup"><span class="grip"></span>
  <button class="center" aria-label="Muestras"><svg class="i20"><path d="M2 4h16v12H2z" fill="currentColor"/><path d="M3 5h4v4H3zM13 5h4v4h-4zM3 11h4v4H3z" fill="#666"/><path d="M8 11h4v4H8zM13 11h4v4h-4z" fill="#888"/></svg></button>
  <button class="center" aria-label="Pinceles"><svg class="i20"><path d="M6 12h9v7H6z" fill="currentColor"/><path d="M8 12 5 6M10.500 12V5M12.500 12l4-5" stroke="currentColor" stroke-width="1.300"/><path d="M2 4c2 0 4 1 4 4-2 0-3-1-4-4ZM8.500 5 11 0c2 3 2 4 1 6ZM14 8c0-3 2-4 5-3-1 3-2 4-5 3Z" fill="currentColor"/></svg></button>
  <button class="center" aria-label="Símbolos"><svg class="i20"><g fill="currentColor"><circle cx="10" cy="5" r="4"/><circle cx="5.500" cy="10.500" r="4"/><circle cx="14.500" cy="10.500" r="4"/><path d="M9 7h2c0 6 1 9 4 10H5c3-1 4-4 4-10Z"/></g></svg></button></div>
 <div class="dockgroup"><span class="grip"></span>
  <button class="center" aria-label="Trazo"><svg class="i20"><path d="M2 4h17v1H2zM2 8h17v2H2zM2 13h17v3H2z" fill="currentColor"/></svg></button>
  <button class="center" aria-label="Degradado"><svg class="i20"><path d="M2 4.500h16v11H2z" fill="url(#gr)" stroke="currentColor"/></svg></button>
  <button class="center" aria-label="Transparencia"><svg class="i20"><circle cx="7.500" cy="7.500" r="6.500" fill="currentColor"/><circle cx="12.500" cy="12.500" r="5.500" fill="#777" fill-opacity=".8" stroke="currentColor"/></svg></button></div>
 <div class="dockgroup"><span class="grip"></span>
  <button class="center" aria-label="Apariencia"><svg class="i20"><circle cx="10" cy="10" r="6" fill="currentColor"/><circle cx="10" cy="10" r="8.500" stroke="currentColor" stroke-dasharray="2 1.500"/></svg></button>
  <button class="center" aria-label="Estilos gráficos"><svg class="i20"><path d="M5.500 9V2.500h13v13H11" stroke="currentColor" stroke-width="1.200"/><path d="M2.500 9.500h5v5h-5zM5 12h5v5H5z" stroke="currentColor" stroke-width="1.300"/></svg></button></div>
 <div class="dockgroup"><span class="grip"></span>
  <button class="center on" aria-label="Capas"><svg class="i20"><path d="m10 1 8.500 5.500L10 12 1.500 6.500Z" fill="currentColor"/><path d="m2 11.500 8 5 8-5" stroke="currentColor" stroke-width="2.800"/></svg></button>
  <button class="center" aria-label="Exportación"><svg class="i20"><use href="#export"/></svg></button>
  <button class="center" aria-label="Mesas de trabajo"><svg class="i20"><path d="M6 14.500H1.500v-13h10V7M6.500 8.500h12v10h-12z" stroke="currentColor" stroke-width="1.200"/></svg></button></div>
</aside>

<aside class="props" aria-label="Propiedades">
 <div class="collapse-strip d-flex align-items-center justify-content-end pe-1"><svg class="i10"><use href="#dblrs"/></svg></div>
 <div class="ptabs d-flex"><button class="on">Propiedades</button><button>Bibliotecas</button></div>
 <section class="sect sect-head"><h2>Grupo</h2></section>
 <section class="sect sect-transform"><h2>Transform</h2>
  <div class="tgrid">
   <button class="refpoint" aria-label="Punto de referencia"><svg width="20" height="20"><path d="M.5.500h4v4h-4zM7.500.500h4v4h-4zM14.500.500h4v4h-4zM.5 7.500h4v4h-4zM14.500 7.500h4v4h-4zM.5 14.500h4v4h-4zM7.500 14.500h4v4h-4zM14.500 14.500h4v4h-4zM5 2.500h2M12 2.500h2M5 16.500h2M12 16.500h2M2.500 5v2M2.500 12v2M16.500 5v2M16.500 12v2" stroke="currentColor"/><path d="M7 7h5v5H7z" fill="#fff"/></svg></button>
   <label for="px">X:</label><span class="box"><input id="px" value="600 px"></span><span></span><label for="pw">W:</label><span class="box"><input id="pw" value="1200 px"></span>
   <button class="unlink" aria-label="Restringir proporciones"><svg width="18" height="20" viewBox="0 0 18 20"><path d="M6 8V5a3 3 0 0 1 6 0v3M6 12v3a3 3 0 0 0 6 0v-3M9 6v8M1 3l15 14" stroke="currentColor" stroke-width="1.500"/></svg></button>
   <label for="py">Y:</label><span class="box"><input id="py" value="600 px"></span><span></span><label for="ph">H:</label><span class="box"><input id="ph" value="1200 px"></span>
   <div class="d-flex align-items-center angle"><svg width="17" height="14"><path d="M9 1 1 10.500h10M6 4c3 1 4 3 4 6" stroke="currentColor" stroke-width="1.300"/><path d="M14 4v2M14 9v2" stroke="currentColor"/></svg><span class="box w56"><input value="0º" aria-label="Ángulo"><button aria-label="Ángulos"><svg class="i10"><use href="#chev"/></svg></button></span></div>
   <span></span><div class="d-flex flips"><button aria-label="Voltear horizontal"><svg width="14" height="14"><path d="M1 3v8l4-4Z" stroke="currentColor"/><path d="M14 2v10L9 7Z" fill="currentColor"/><path d="M7.500 1v12" stroke="currentColor" stroke-dasharray="1 1"/></svg></button><button aria-label="Voltear vertical"><svg width="12" height="14"><path d="M2 0h9L6.500 5Z" fill="currentColor"/><path d="M3 13h7L6.500 9.500Z" stroke="currentColor"/><path d="M0 7.500h12" stroke="currentColor" stroke-dasharray="1 1"/></svg></button></div>
  </div>
  <button class="dots w-100 mt-2" aria-label="Más opciones"><i></i><i></i><i></i></button></section>
 <section class="sect sect-look"><h2>Appearance</h2>
  <div class="look mt-1"><button class="chip18 none" aria-label="Relleno"></button><span class="name title">Fill</span></div>
  <div class="look"><button class="chip18 strokechip" aria-label="Trazo"></button><label class="name" for="st"><span class="dotted strong">Stroke</span></label><div class="box w69"><button aria-label="Ajustar"><svg width="12" height="18"><use href="#updown"/></svg></button><input id="st" value="1 pt"><button aria-label="Grosores"><svg class="i10"><use href="#chev"/></svg></button></div></div>
  <div class="look"><span class="chip18 checker"></span><label class="name" for="op"><span class="dotted strong">Opacity</span></label><div class="box w69"><input id="op" value="100%"><button aria-label="Opacidad"><svg class="i10"><use href="#chevr"/></svg></button></div></div>
  <button class="d-block mt-2 ps-2 fxbtn" aria-label="Efectos">fx.</button>
  <button class="dots w-100 mt-2" aria-label="Más opciones"><i></i><i></i><i></i></button></section>
 <section class="sect sect-path"><h2>Pathfinder</h2>
  <div class="d-flex align-items-center mt-1"><div class="d-flex me-auto mt-3 pathrow">
   <button aria-label="Unir"><svg width="14" height="14"><path d="M0 0h10v4h4v10H4v-4H0Z" fill="currentColor"/></svg></button><button aria-label="Menos frente"><svg width="14" height="14"><path d="M0 0h10v4H4v6H0Z" fill="currentColor"/><path d="M4.500 4.500h9v9h-9z" stroke="currentColor"/></svg></button><button aria-label="Formar intersección"><svg width="14" height="14"><path d="M.5.500h9v9h-9zM4.500 4.500h9v9h-9z" stroke="currentColor"/><path d="M4 4h6v6H4z" fill="currentColor"/></svg></button><button aria-label="Excluir"><svg width="14" height="14"><path d="M0 0h10v4h4v10H4v-4H0ZM4 4v6h6V4Z" fill="currentColor" fill-rule="evenodd"/></svg></button></div>
   <button class="expand-btn" disabled>Expand</button></div>
  <button class="dots w-100 mt-1" aria-label="Más opciones"><i></i><i></i><i></i></button></section>
 <section class="quick"><h2>Quick Actions</h2>
  <div class="qgrid"><button class="qbtn">Offset Path</button><button class="qbtn">Ungroup</button><button class="qbtn qwide">Recolor</button><div class="d-flex qwide"><button class="qbtn flex-fill">Start Global Edit</button><button class="qbtn center qmore" aria-label="Opciones"><svg class="i10"><use href="#chev"/></svg></button></div></div></section>
</aside>
</div>
</div>
<script src="https://cdn.jsdelivr.net/npm/bootstrap@5.3.0/dist/js/bootstrap.bundle.min.js"></script>
<script>
// Six by six cells with selection handles on the outer edge
const step=118,start=3,end=711;let lines='',handles='';
for(let i=0;i<7;i++){const p=start+i*step;
 lines+=`<path d="M${p} ${start}V${end}" stroke="#6b8bc4" stroke-width="${i%6?1.5:2}"/><path d="M${start} ${p}H${end}" stroke="#6a7fb8" stroke-width="1.6"/>`;
 for(const [x,y] of [[p,start],[p,end],[start,p],[end,p]])handles+=`<path d="M${x-2.5} ${y-2.5}h5v5h-5z" fill="#5b7ee0"/>`;}
lines+='<path d="M3 3H711M2.500 3V711" stroke="#23285c" stroke-width="1"/>';
document.getElementById('grid').innerHTML=lines+handles;
</script>
</body>
</html>
